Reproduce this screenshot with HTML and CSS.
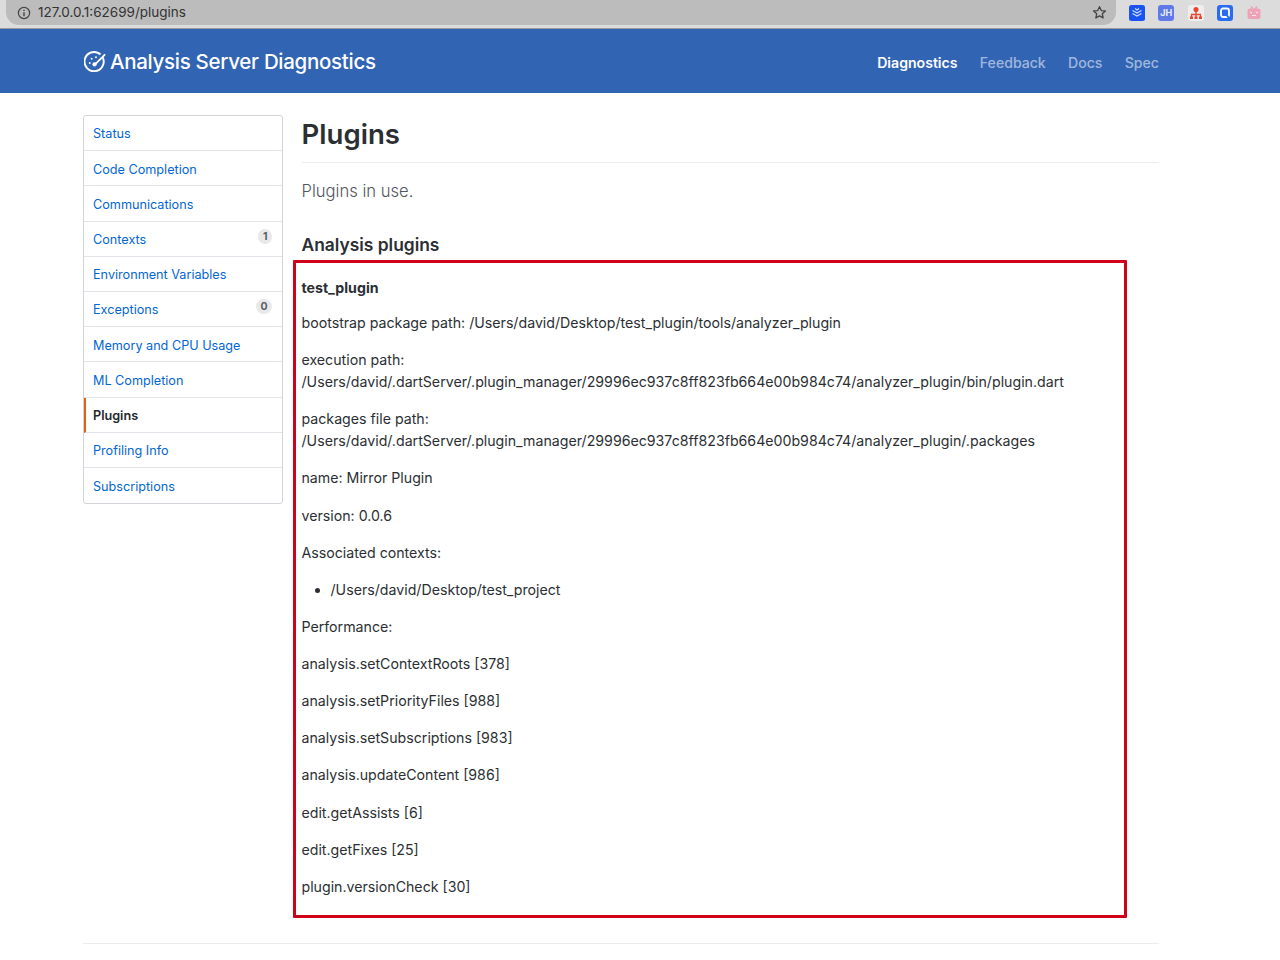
FILE: index.html
```html
<!DOCTYPE html>
<html lang="en">
<head>
    <meta charset="UTF-8">
    <title>Analysis Server Diagnostics - Plugins</title>
    <link rel="stylesheet" href="styles.css">
</head>
<body>
    <div class="chrome">
        <div class="urlbar">
            <svg class="info" viewBox="0 0 14 14" width="14" height="14">
                <circle cx="7" cy="7" r="5.6" fill="none" stroke="#444" stroke-width="1.2"/>
                <path d="M7 6.2v4M7 3.8v1.2" stroke="#444" stroke-width="1.4" fill="none"/>
            </svg>
            <span class="url">127.0.0.1:62699/plugins</span>
            <svg class="star" viewBox="0 0 16 16" width="15" height="15">
                <path d="M8 1.8l1.9 4.1 4.4.5-3.3 3 .9 4.4L8 11.6l-3.9 2.2.9-4.4-3.3-3 4.4-.5z" fill="none" stroke="#444" stroke-width="1.4" stroke-linejoin="round"/>
            </svg>
        </div>
        <div class="exts">
            <svg class="ext" viewBox="0 0 16 16" width="16" height="16">
                <rect width="16" height="16" rx="2.5" fill="#1a53f0"/>
                <path d="M3.5 5.5L8 8l4.500-2.500M3.500 8.500L8 11l4.500-2.500M6 3.500L8 5l2-1.500" fill="none" stroke="#cfe0ff" stroke-width="1.200"/>
            </svg>
            <span class="ext ext-jh">JH</span>
            <svg class="ext" viewBox="0 0 16 16" width="16" height="16">
                <rect width="16" height="16" rx="2.500" fill="#eeeeee"/>
                <circle cx="8" cy="4.500" r="2.500" fill="#e8452c"/>
                <path d="M8 6v3M3.500 12V9.500h9V12M8 9.500V12" fill="none" stroke="#e8452c" stroke-width="1.300"/>
                <path d="M2 11.500h3v2.500H2zM6.500 11.500h3v2.500h-3zM11 11.500h3v2.500h-3z" fill="#e8452c"/>
            </svg>
            <svg class="ext" viewBox="0 0 16 16" width="16" height="16">
                <rect width="16" height="16" rx="3" fill="#2a6cf0"/>
                <rect x="4" y="3.500" width="8" height="8.500" rx="2" fill="none" stroke="#fff" stroke-width="1.800"/>
                <path d="M10 10.500l2 2.500" stroke="#2a6cf0" stroke-width="2"/>
            </svg>
            <svg class="ext" viewBox="0 0 16 16" width="16" height="16">
                <path d="M5 1.500l2 2.500M11 1.500l-2 2.500" stroke="#eda2b8" stroke-width="1.300"/>
                <rect x="1.500" y="3.500" width="13" height="10.500" rx="2.500" fill="#eda2b8"/>
                <path d="M4 7l2 1M12 7l-2 1M6 10.500h4" stroke="#fbe3ea" stroke-width="1.200"/>
            </svg>
        </div>
    </div>

    <header class="masthead">
        <div class="container masthead-inner">
            <a class="brand" href="#">
                <svg viewBox="0 0 24 24" width="23" height="23">
                    <path d="M19.600 6.800A10 10 0 1 1 16.500 3" fill="none" stroke="#fff" stroke-width="2" stroke-linecap="round"/>
                    <path d="M11 14.500L21.500 4" fill="none" stroke="#fff" stroke-width="2" stroke-linecap="round"/>
                    <circle cx="11" cy="14" r="2.200" fill="#fff"/>
                    <circle cx="6" cy="12.500" r="1" fill="#fff"/>
                    <circle cx="8" cy="8" r="1" fill="#fff"/>
                    <circle cx="12.500" cy="6.500" r="1" fill="#fff"/>
                </svg>
                <span>Analysis Server Diagnostics</span>
            </a>
            <nav class="topnav">
                <a class="active" href="#">Diagnostics</a>
                <a href="#">Feedback</a>
                <a href="#">Docs</a>
                <a href="#">Spec</a>
            </nav>
        </div>
    </header>

    <div class="container columns">
        <ul class="menu">
            <li><a href="#">Status</a></li>
            <li><a href="#">Code Completion</a></li>
            <li><a href="#">Communications</a></li>
            <li><a href="#">Contexts</a><span class="counter">1</span></li>
            <li><a href="#">Environment Variables</a></li>
            <li><a href="#">Exceptions</a><span class="counter">0</span></li>
            <li><a href="#">Memory and CPU Usage</a></li>
            <li><a href="#">ML Completion</a></li>
            <li class="selected"><a href="#">Plugins</a></li>
            <li><a href="#">Profiling Info</a></li>
            <li><a href="#">Subscriptions</a></li>
        </ul>

        <main class="content">
            <h1>Plugins</h1>
            <p class="lead">Plugins in use.</p>
            <h2>Analysis plugins</h2>
            <div class="plugin">
                <div class="highlight"></div>
                <p class="plugin-name"><strong>test_plugin</strong></p>
                <p>bootstrap package path: /Users/david/Desktop/test_plugin/tools/analyzer_plugin</p>
                <p>execution path:<br>/Users/david/.dartServer/.plugin_manager/29996ec937c8ff823fb664e00b984c74/analyzer_plugin/bin/plugin.dart</p>
                <p>packages file path:<br>/Users/david/.dartServer/.plugin_manager/29996ec937c8ff823fb664e00b984c74/analyzer_plugin/.packages</p>
                <p>name: Mirror Plugin</p>
                <p>version: 0.0.6</p>
                <p>Associated contexts:</p>
                <ul class="contexts">
                    <li>/Users/david/Desktop/test_project</li>
                </ul>
                <p>Performance:</p>
                <p>analysis.setContextRoots [378]</p>
                <p>analysis.setPriorityFiles [988]</p>
                <p>analysis.setSubscriptions [983]</p>
                <p>analysis.updateContent [986]</p>
                <p>edit.getAssists [6]</p>
                <p>edit.getFixes [25]</p>
                <p>plugin.versionCheck [30]</p>
            </div>
        </main>
    </div>

    <div class="container">
        <div class="footer-line"></div>
    </div>
</body>
</html>
```

FILE: styles.css
```css
* {
    box-sizing: border-box;
}

html, body {
    height: 100%;
}

body {
    margin: 0;
    height: 960px;
    overflow: hidden;
    background-color: #fff;
    color: #2b2f33;
    font-family: Inter, "Liberation Sans", sans-serif;
    font-size: 14.180px;
    line-height: 22px;
}

a {
    text-decoration: none;
}

.container {
    width: 1076px;
    margin: 0 0 0 83px;
}

/* browser bar */
.chrome {
    height: 29px;
    display: flex;
    align-items: flex-start;
    background-color: #dcdcdc;
    border-bottom: 1px solid #9a9a9a;
}

.urlbar {
    width: 1110px;
    height: 25px;
    margin-left: 6px;
    padding: 0 9px 0 11px;
    display: flex;
    align-items: center;
    background-color: #bcbcbc;
    border-radius: 0 0 13px 13px;
}

.url {
    margin: 0 0 2px 7px;
    flex: 1;
    color: #333;
    font-size: 13.500px;
}

.exts {
    display: flex;
    margin-left: 13px;
    gap: 13.300px;
    padding-top: 5px;
}

.ext {
    display: block;
    width: 16px;
    height: 16px;
}

.ext-jh {
    background-color: #5f79e8;
    border-radius: 3px;
    color: #e8edff;
    font-size: 9px;
    font-weight: 700;
    line-height: 16px;
    text-align: center;
}

/* header */
.masthead {
    height: 64px;
    background-color: #3264b4;
}

.masthead-inner {
    height: 100%;
    display: flex;
    align-items: center;
    justify-content: space-between;
}

.brand {
    display: flex;
    align-items: center;
    gap: 3px;
    margin: 2px 0 0 1px;
    color: #fff;
    font-size: 20.500px;
    font-weight: 500;
    letter-spacing: -0.3px;
}

.topnav {
    display: flex;
    gap: 22.300px;
    padding-top: 3px;
    font-size: 14.100px;
}

.topnav a {
    color: rgba(255, 255, 255, 0.55);
    font-weight: 500;
}

.topnav a.active {
    color: #fff;
    font-weight: 600;
}

/* sidebar + content */
.columns {
    display: flex;
    align-items: flex-start;
    gap: 18.500px;
    padding-top: 22px;
    height: 850px;
}

.menu {
    list-style: none;
    width: 200px;
    margin: 0;
    padding: 0;
    flex: none;
    border: 1px solid #d1d5da;
    border-radius: 3px;
    font-size: 12.650px;
}

.menu li {
    height: 35.200px;
    padding: 2.600px 9px 0;
    display: flex;
    align-items: center;
    justify-content: space-between;
    border-bottom: 1px solid #e1e4e8;
}

.menu li:last-child {
    border-bottom: 0;
}

.menu a {
    color: #0366d6;
}

.menu .selected {
    border-left: 2px solid #e36209;
    padding-left: 7px;
}

.menu .selected a {
    color: #24292e;
    font-weight: 600;
}

.counter {
    height: 15px;
    margin: -7px 1px 0 0;
    padding: 0 4.500px;
    border-radius: 8px;
    background-color: #e9e9e9;
    color: #586069;
    font-size: 10.500px;
    font-weight: 700;
    line-height: 15px;
    text-align: center;
}

.content {
    flex: 1;
    min-width: 0;
}

h1 {
    margin: 0;
    height: 48px;
    font-size: 27.600px;
    font-weight: 600;
    line-height: 38px;
    border-bottom: 1px solid #eaecef;
}

.lead {
    margin: 15px 0 0;
    color: #4f565d;
    font-size: 16.600px;
    font-weight: 300;
    line-height: 26px;
}

h2 {
    margin: 28px 0 0;
    font-size: 17.400px;
    font-weight: 600;
    line-height: 26px;
}

.plugin {
    position: relative;
    padding-top: 19px;
}

.plugin p {
    margin: 0 0 15.140px;
}

.plugin .plugin-name {
    margin-bottom: 13px;
}

.contexts {
    margin: 0 0 15.140px;
    padding-left: 29px;
}

/* red box drawn over the screenshot */
.highlight {
    position: absolute;
    left: -8.500px;
    top: 2px;
    width: 834px;
    height: 658px;
    border: 3px solid #d0021b;
    border-radius: 1px;
}

.footer-line {
    height: 1px;
    background-color: #eaecef;
}
```
